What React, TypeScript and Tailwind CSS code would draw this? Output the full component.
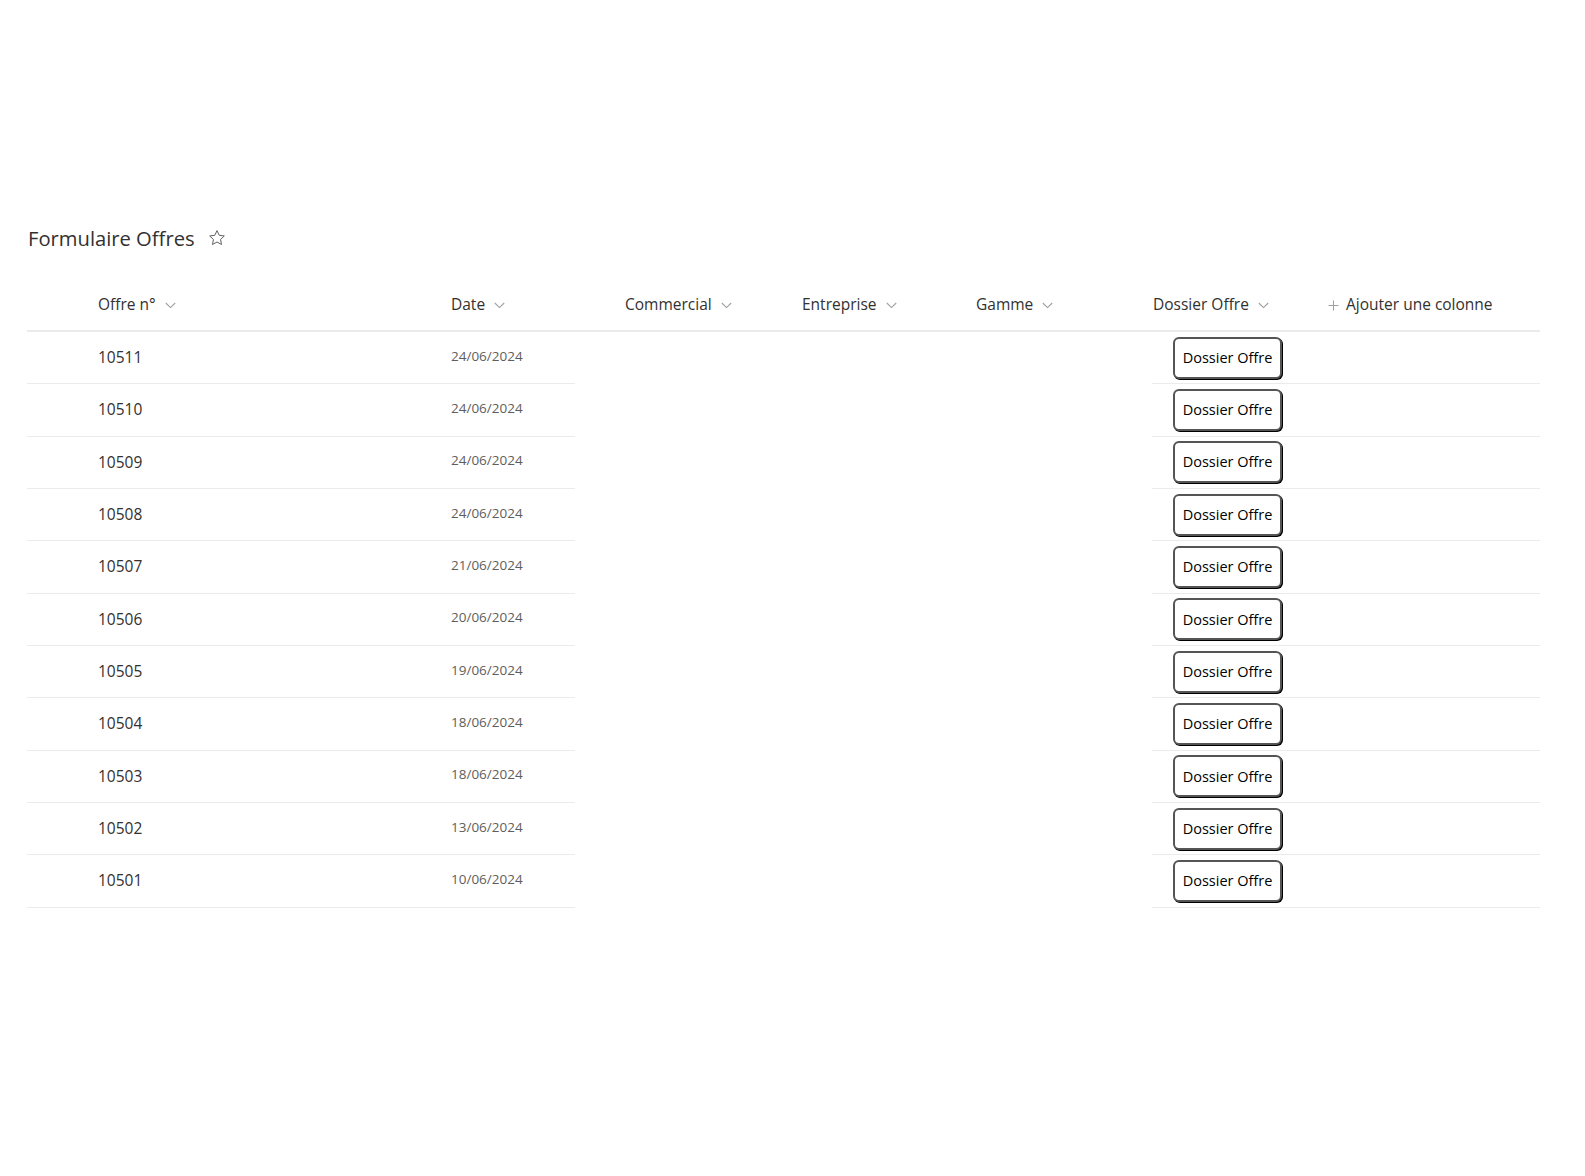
import React from "react";

const rows = [
  ["10511", "24/06/2024"],
  ["10510", "24/06/2024"],
  ["10509", "24/06/2024"],
  ["10508", "24/06/2024"],
  ["10507", "21/06/2024"],
  ["10506", "20/06/2024"],
  ["10505", "19/06/2024"],
  ["10504", "18/06/2024"],
  ["10503", "18/06/2024"],
  ["10502", "13/06/2024"],
  ["10501", "10/06/2024"],
];

function Chevron() {
  return (
    <svg width="11" height="7" viewBox="0 0 11 7" className="ml-[9px] mt-[1px]" fill="none">
      <path d="M0.8 1l4.7 4.6L10.2 1" stroke="#a19f9d" strokeWidth="1.1" />
    </svg>
  );
}

function Star() {
  return (
    <svg width="18" height="18" viewBox="0 0 20 20" fill="none">
      <path
        d="M10 1.8l2.45 5.2 5.65.7-4.15 3.9 1.05 5.6L10 14.45 4.99 17.2l1.06-5.6L1.9 7.7l5.65-.7L10 1.8z"
        stroke="#605e5c"
        strokeWidth="1.1"
        strokeLinejoin="round"
      />
    </svg>
  );
}

export default function App() {
  return (
    <div className="min-h-[1176px] w-[1585px] bg-white font-['Open_Sans',sans-serif] text-[#323130]">
      <div className="pt-[222px] pl-[28px] flex items-center h-[254px]">
        <h1 className="text-[20.2px] leading-[32px] text-[#323130]">Formulaire Offres</h1>
        <span className="ml-[13px] flex items-center">
          <Star />
        </span>
      </div>
      <div className="ml-[27px] w-[1513px] mt-[28px]">
        <div className="flex h-[50px] items-center pb-[2px] border-b-2 border-[#edebe9]">
          <div className="flex items-center w-[424px] pl-[71px]">
            <span className="text-[15.5px] font-[530]">Offre n°</span>
            <Chevron />
          </div>
          <div className="flex items-center w-[174px]">
            <span className="text-[15.5px] font-[530]">Date</span>
            <Chevron />
          </div>
          <div className="flex items-center w-[177px]">
            <span className="text-[15.5px] font-[530]">Commercial</span>
            <Chevron />
          </div>
          <div className="flex items-center w-[174px]">
            <span className="text-[15.5px] font-[530]">Entreprise</span>
            <Chevron />
          </div>
          <div className="flex items-center w-[177px]">
            <span className="text-[15.5px] font-[530]">Gamme</span>
            <Chevron />
          </div>
          <div className="flex items-center w-[175px]">
            <span className="text-[15.5px] font-[530]">Dossier Offre</span>
            <Chevron />
          </div>
          <div className="flex items-center">
            <svg width="11" height="11" viewBox="0 0 11 11" fill="none">
              <path d="M5.5 0.5v10M0.5 5.5h10" stroke="#a19f9d" strokeWidth="1" />
            </svg>
            <span className="ml-[7px] text-[15.5px] font-[530]">Ajouter une colonne</span>
          </div>
        </div>
        {rows.map(([n, d]) => (
          <div key={n} className="flex">
            <div className="flex items-center w-[548px] h-[52.35px] border-b border-[#edebe9]">
              <span className="w-[424px] pl-[71px] text-[15.5px]">{n}</span>
              <span className="text-[13.5px] text-[#605e5c] -mt-[4px]">{d}</span>
            </div>
            <div className="ml-[577px] flex items-center w-[388px] h-[52.35px] border-b border-[#edebe9] pl-[21px]">
              <button className="h-[42px] w-[109px] rounded-[6px] border-2 border-[#555] shadow-[1px_1px_0_#000] bg-white text-[14.5px] text-black">
                Dossier Offre
              </button>
            </div>
          </div>
        ))}
      </div>
    </div>
  );
}
